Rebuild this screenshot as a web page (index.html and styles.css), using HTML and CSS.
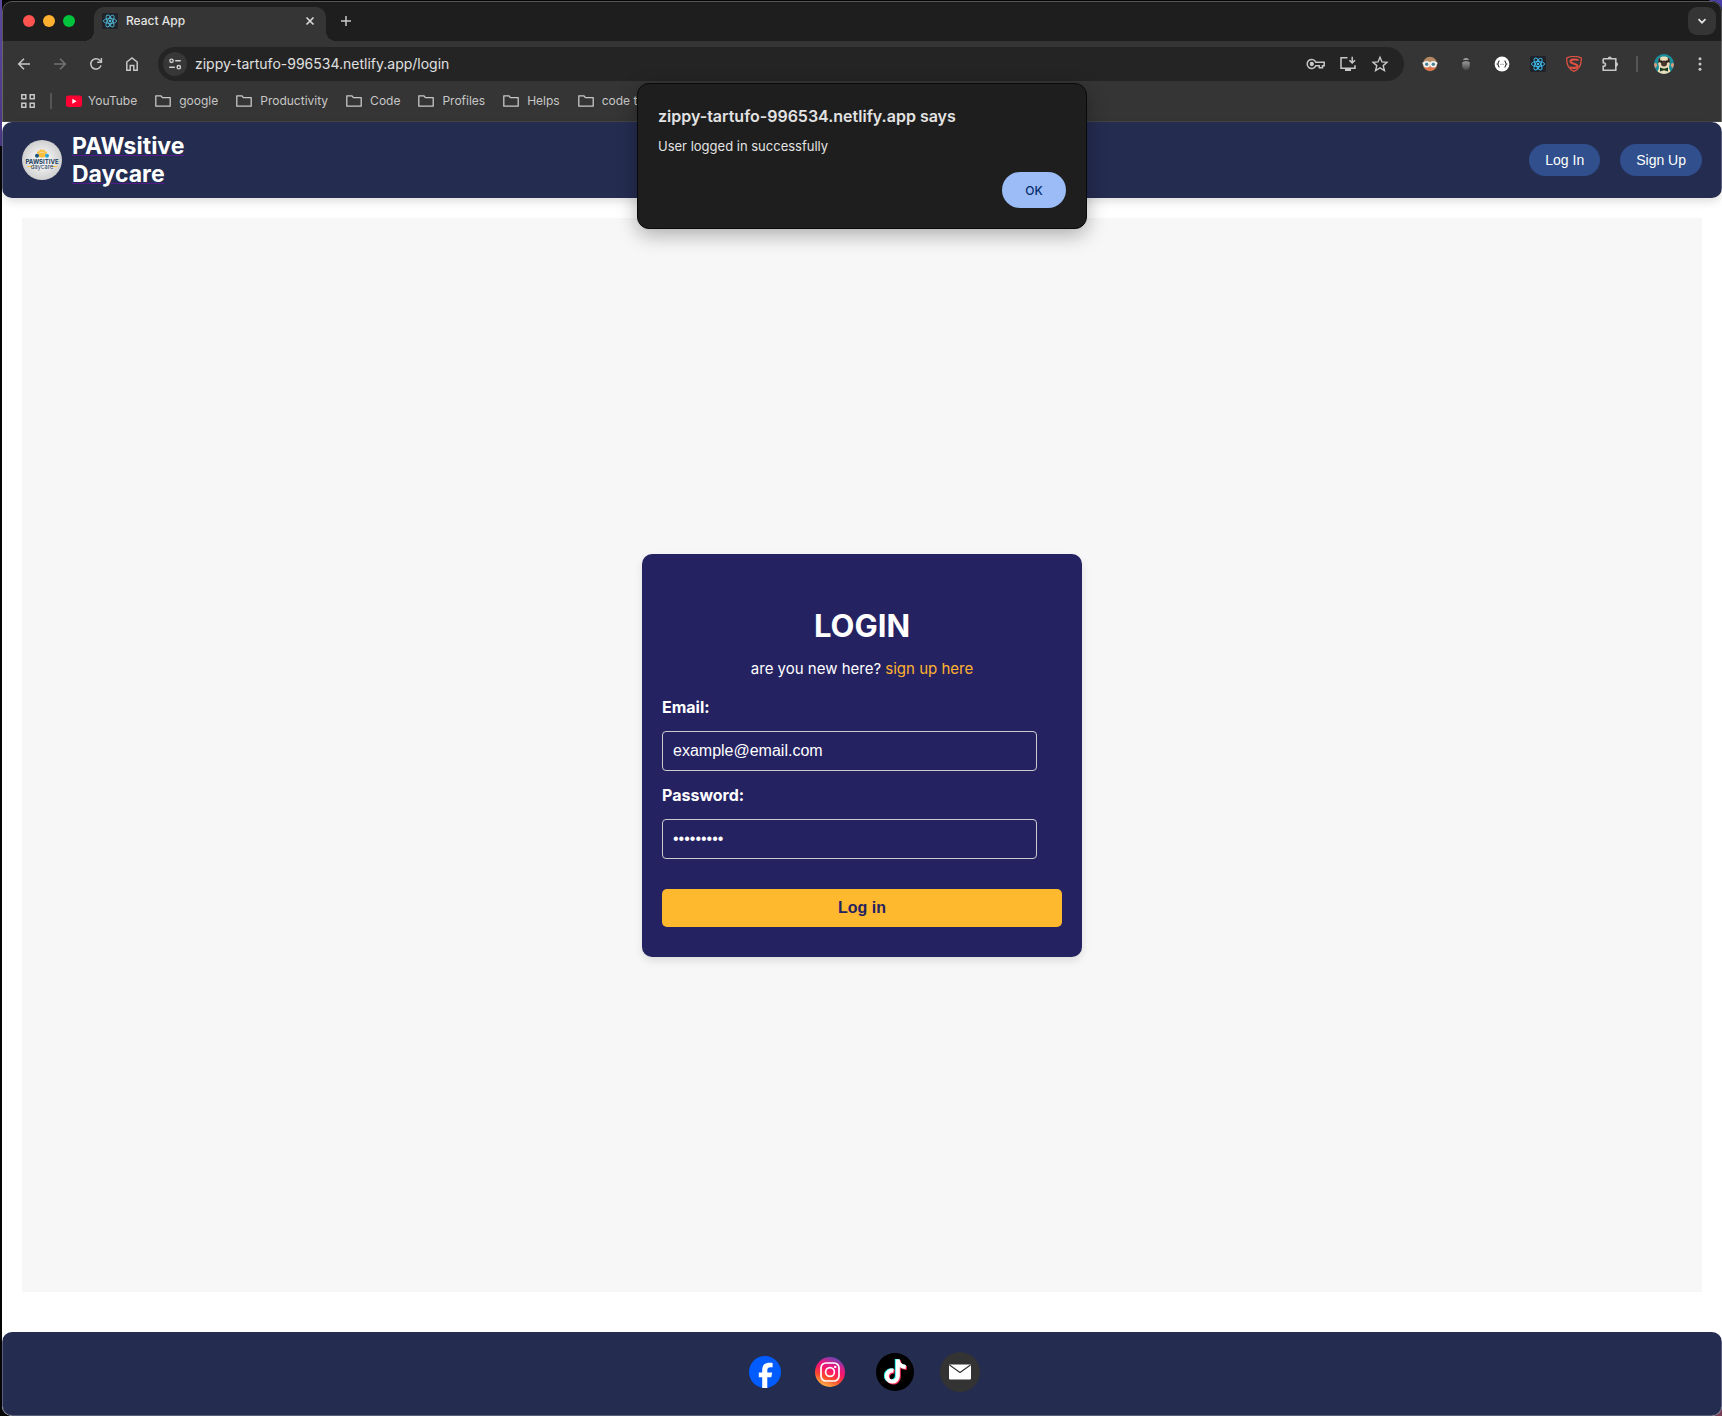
FILE: index.html
```html
<!DOCTYPE html>
<html lang="en">
<head>
<meta charset="utf-8">
<meta name="viewport" content="width=device-width, initial-scale=1">
<title>React App</title>
<link rel="stylesheet" href="styles.css">
</head>
<body>
<svg class="defs" aria-hidden="true">
  <defs>
    <symbol id="react" viewBox="0 0 16 16">
      <rect width="16" height="16" rx="1" fill="#20232a"/>
      <g fill="none" stroke="currentColor" stroke-width="0.9">
        <ellipse cx="8" cy="8" rx="6.6" ry="2.5"/>
        <ellipse cx="8" cy="8" rx="6.6" ry="2.5" transform="rotate(60 8 8)"/>
        <ellipse cx="8" cy="8" rx="6.6" ry="2.5" transform="rotate(120 8 8)"/>
      </g>
      <circle cx="8" cy="8" r="1.3" fill="currentColor"/>
    </symbol>
    <symbol id="folder" viewBox="0 0 16 16">
      <path d="M.8 13.2V2.8h5l1.600 1.800h7.800v8.600z" fill="none" stroke="currentColor" stroke-width="1.300" stroke-linejoin="round"/>
    </symbol>
    <linearGradient id="ig" x1="0.3" y1="1" x2="0.7" y2="0">
      <stop offset="0" stop-color="#fdc04c"/><stop offset="0.3" stop-color="#fb4a2c"/><stop offset="0.55" stop-color="#f8156a"/><stop offset="0.75" stop-color="#d4208c"/><stop offset="1" stop-color="#5a4bb8"/>
    </linearGradient>
    <radialGradient id="logo-bg"><stop offset="0.4" stop-color="#eeeeee"/><stop offset="1" stop-color="#cfcfcf"/></radialGradient>
    <linearGradient id="acorn" x1="0" y1="0" x2="0" y2="1"><stop offset="0" stop-color="#999"/><stop offset="1" stop-color="#444"/></linearGradient>
  </defs>
</svg>

<div class="window">
  <div class="tab-strip">
    <div class="lights">
      <button class="light light-close" aria-label="Close window"></button>
      <button class="light light-min" aria-label="Minimize window"></button>
      <button class="light light-max" aria-label="Maximize window"></button>
    </div>
    <div class="tab">
      <svg class="icon16 react-blue" aria-hidden="true"><use href="#react"/></svg>
      <span class="tab-title">React App</span>
      <button class="icon-btn small" aria-label="Close tab"><svg class="icon16" viewBox="0 0 16 16"><path d="M4.5 4.5l7 7m0-7l-7 7" stroke="#dcdcdc" stroke-width="1.6"/></svg></button>
    </div>
    <button class="icon-btn new-tab" aria-label="New tab"><svg class="icon16" viewBox="0 0 16 16"><path d="M8 3v10M3 8h10" stroke="#c9c9c9" stroke-width="1.5"/></svg></button>
    <button class="tab-search" aria-label="Search tabs"><svg class="icon16" viewBox="0 0 16 16"><path d="M4.5 6.2L8 9.7l3.5-3.5" fill="none" stroke="#e3e3e3" stroke-width="1.7"/></svg></button>
  </div>

  <div class="toolbar">
    <div class="tools">
      <button class="icon-btn" aria-label="Back"><svg class="icon16" viewBox="0 0 16 16"><path d="M14 8H3m5-5.3L2.7 8 8 13.3" fill="none" stroke="#c7c7c7" stroke-width="1.5"/></svg></button>
      <button class="icon-btn" aria-label="Forward" disabled><svg class="icon16" viewBox="0 0 16 16"><path d="M2 8h11M8 2.7L13.3 8 8 13.3" fill="none" stroke="#727272" stroke-width="1.5"/></svg></button>
      <button class="icon-btn" aria-label="Reload"><svg class="icon16" viewBox="0 0 16 16"><path d="M13 9.4A5.2 5.2 0 1 1 11.8 4.3L13 5.5" fill="none" stroke="#c7c7c7" stroke-width="1.5"/><path d="M13.4 2v4.2H9.2" fill="none" stroke="#c7c7c7" stroke-width="1.5"/></svg></button>
      <button class="icon-btn" aria-label="Home"><svg class="icon16" viewBox="0 0 16 16"><path d="M2.8 14.2V6L8 2l5.2 4v8.2H9.8V9.4H6.2v4.8z" fill="none" stroke="#c7c7c7" stroke-width="1.5"/></svg></button>
    </div>
    <div class="address">
      <button class="site-info" aria-label="Site information"><svg class="icon16" viewBox="0 0 16 16" fill="none" stroke="#d0d0d0" stroke-width="1.4"><circle cx="4.5" cy="4.8" r="1.7"/><path d="M8.2 4.8h5.6M2.2 11.2h5.6"/><circle cx="11.8" cy="11.2" r="1.7"/></svg></button>
      <input class="url" type="text" aria-label="Address" value="zippy-tartufo-996534.netlify.app/login">
      <div class="address-actions">
        <button class="icon-btn narrow" aria-label="Passwords"><svg class="icon20" viewBox="0 0 20 20" fill="none" stroke="#c7c7c7" stroke-width="1.5"><path d="M9.8 8.2H18.2v3.6h-1.7v2h-3.2v-2H9.8A4.5 4.5 0 1 1 9.8 8.2z"/><circle cx="5.8" cy="10" r="1.4" fill="#c7c7c7"/></svg></button>
        <button class="icon-btn narrow" aria-label="Install app"><svg class="icon18" viewBox="0 0 18 18" fill="none" stroke="#c7c7c7" stroke-width="1.5"><path d="M8.5 2.8H2v10.4h14v-3"/><path d="M13.2 1.8v6M10.4 5.2l2.8 2.8L16 5.2"/><path d="M6 14.8h6" stroke-width="2.6"/></svg></button>
        <button class="icon-btn narrow" aria-label="Bookmark page"><svg class="icon18" viewBox="0 0 18 18"><path d="M9 2.2l2 4.700 5 .4-3.800 3.300 1.200 4.900L9 12.900l-4.400 2.600 1.200-4.900L2 7.300l5-.4z" fill="none" stroke="#c7c7c7" stroke-width="1.400"/></svg></button>
      </div>
    </div>
    <div class="tools">
      <button class="icon-btn" aria-label="Goggles extension"><svg class="icon16" viewBox="0 0 16 16"><circle cx="8" cy="8" r="7.2" fill="#b58a63"/><path d="M2 11.3h12A7 7 0 0 1 2 11.3z" fill="#e5734a"/><path d="M.6 6.2h14.8v2H.6z" fill="#eee"/><circle cx="4.7" cy="8.3" r="3.3" fill="#f4f4f4"/><circle cx="11.3" cy="8.3" r="3.3" fill="#f4f4f4"/><circle cx="4.7" cy="8.3" r="1.7" fill="#4d8291"/><circle cx="11.3" cy="8.3" r="1.7" fill="#4d8291"/></svg></button>
      <button class="icon-btn" aria-label="Incognito extension"><svg class="icon16" viewBox="0 0 16 16"><path d="M5 4C6 1.400 10 1.400 11 4z" fill="#999"/><path d="M4.200 6.800c0-2 7.600-2 7.600 0v2.700c0 2.500-2 4.800-3.800 4.800s-3.800-2.300-3.800-4.800z" fill="url(#acorn)"/></svg></button>
      <button class="icon-btn" aria-label="JSON extension"><svg class="icon16" viewBox="0 0 16 16"><circle cx="8" cy="8" r="7.400" fill="#fff"/><path d="M5.500 4.800c-1.500 0-.6 2.600-2 3.200 1.400.6.5 3.200 2 3.200M10.500 4.800c1.500 0 .6 2.600 2 3.200-1.400.6-.5 3.200-2 3.200" fill="none" stroke="#333" stroke-width="1.200"/><path d="M6.200 8.300h3.600" stroke="#888" stroke-dasharray="1 .4"/></svg></button>
      <button class="icon-btn react-bright" aria-label="React extension"><svg class="icon16"><use href="#react"/></svg></button>
      <button class="icon-btn" aria-label="Shield extension"><svg class="icon16" viewBox="0 0 16 16" fill="none" stroke="#de5041"><path d="M.8 1.800C5 .2 11 .2 15.200 1.800c.4 6-1 11-7.200 13.600C1.800 12.800.4 7.800.8 1.800z" stroke-width="1.300"/><path d="M12.500 4C9 3.200 4.500 3.200 4.500 5.600c0 2.400 7 1.800 7 4.400 0 2.300-4.500 2.300-8 1.200" stroke-width="2.200"/></svg></button>
      <button class="icon-btn" aria-label="Extensions"><svg class="icon18" viewBox="0 0 18 18"><path d="M2.200 3.700h12.600v3.800M2.200 3.700v4c3 0 3 3.600 0 3.600v4h12.600v-4.200" fill="none" stroke="#c7c7c7" stroke-width="1.600"/><path d="M14.800 7v5" stroke="#c7c7c7" stroke-width="1.600"/><path d="M6.800 3.500a2 2 0 0 1 4 0zM15 7.200a2 2 0 0 1 0 4.200z" fill="#c7c7c7"/></svg></button>
    </div>
    <span class="divider"></span>
    <div class="tools">
      <button class="icon-btn" aria-label="Profile"><svg class="icon20" viewBox="0 0 20 20"><circle cx="10" cy="10" r="10" fill="#178f9d"/><path d="M4 7c0-6 12-6 12 0l-1 7 1.500 3.500a10 10 0 0 1-13 0L5 14z" fill="#ecdcb8"/><path d="M4.300 5l2-1.500L6 8l-2 1zM15.700 5l-2-1.500.3 4.500 2 1z" fill="#33261f"/><ellipse cx="10" cy="9.500" rx="3" ry="3" fill="#44352d"/><circle cx="7" cy="7.500" r="1.200" fill="#221a16"/><circle cx="13" cy="7.500" r="1.200" fill="#221a16"/><path d="M0 10c1-2 3-1 3 1s-1 2-2 3zM20 10c-1-2-3-1-3 1s1 2 2 3z" fill="#e39a76"/><path d="M6 13.500l4 1.300 4-1.300v4l-4-1.300-4 1.300z" fill="#173f25"/></svg></button>
      <button class="icon-btn" aria-label="Menu"><svg class="icon16" viewBox="0 0 16 16" fill="#c7c7c7"><circle cx="8" cy="2.700" r="1.500"/><circle cx="8" cy="8" r="1.500"/><circle cx="8" cy="13.300" r="1.500"/></svg></button>
    </div>
  </div>

  <nav class="bookmarks" aria-label="Bookmarks">
    <button class="icon-btn small" aria-label="Apps"><svg class="icon16" viewBox="0 0 16 16" fill="none" stroke="#c7c7c7" stroke-width="1.500"><path d="M1.800 1.800h4v4h-4zM10.200 1.800h4v4h-4zM1.800 10.200h4v4h-4zM10.200 10.200h4v4h-4z"/></svg></button>
    <span class="divider"></span>
    <a class="bookmark youtube" href="#youtube"><svg class="icon16" viewBox="0 0 16 16"><rect y="2.500" width="16" height="11.500" rx="2.500" fill="#ff0033"/><path d="M6.300 5.800v5l4.300-2.500z" fill="#fff"/></svg>YouTube</a>
    <a class="bookmark" href="#google"><svg class="icon16"><use href="#folder"/></svg>google</a>
    <a class="bookmark" href="#productivity"><svg class="icon16"><use href="#folder"/></svg>Productivity</a>
    <a class="bookmark" href="#code"><svg class="icon16"><use href="#folder"/></svg>Code</a>
    <a class="bookmark" href="#profiles"><svg class="icon16"><use href="#folder"/></svg>Profiles</a>
    <a class="bookmark" href="#helps"><svg class="icon16"><use href="#folder"/></svg>Helps</a>
    <a class="bookmark" href="#code-t"><svg class="icon16"><use href="#folder"/></svg>code t</a>
  </nav>

  <div class="page">
    <header class="site-header">
      <a class="brand" href="#home">
        <svg class="logo" viewBox="0 0 40 40" aria-hidden="true">
          <circle cx="20" cy="20" r="20" fill="url(#logo-bg)"/>
          <g fill="#f9bd3c"><ellipse cx="20" cy="15" rx="3.500" ry="2.600"/><circle cx="16.400" cy="12.600" r="1.400"/><circle cx="18.600" cy="11" r="1.400"/><circle cx="21.400" cy="11" r="1.400"/><circle cx="23.600" cy="12.600" r="1.400"/></g>
          <circle cx="15" cy="15.800" r="2" fill="#17557a"/><circle cx="25" cy="15.800" r="2" fill="#2ba2d4"/>
          <text class="logo-name" x="20" y="24" text-anchor="middle">PAWSITIVE</text>
          <path d="M5.500 26.500h5M30 26.500h5" stroke="#f9bd3c"/>
          <text class="logo-sub" x="20" y="29" text-anchor="middle">daycare</text>
        </svg>
        <span class="brand-name">PAWsitive Daycare</span>
      </a>
      <nav class="account">
        <button class="pill">Log In</button>
        <button class="pill">Sign Up</button>
      </nav>
    </header>

    <main class="panel">
      <form class="card">
        <h1 class="card-title">LOGIN</h1>
        <p class="card-note">are you new here? <a class="signup" href="#signup">sign up here</a></p>
        <label class="label" for="email">Email:</label>
        <input class="field" id="email" type="email" value="example@email.com">
        <label class="label" for="password">Password:</label>
        <input class="field" id="password" type="password" value="pawsitive">
        <button class="submit" type="button">Log in</button>
      </form>
    </main>

    <footer class="site-footer">
      <a class="social" href="#facebook" aria-label="Facebook"><svg viewBox="0 0 40 40"><circle cx="20" cy="20" r="16" fill="#005cff"/><path d="M17.200 36V25.200h-3.400v-4.600h3.400v-2.400c0-5 2.600-7.400 7.400-7.400 1.300 0 2.200.1 3 .3v4.200h-2.100c-2.300 0-3.200 1-3.200 3v2.300h4.900l-.9 4.600h-4V36z" fill="#fff"/></svg></a>
      <a class="social" href="#instagram" aria-label="Instagram"><svg viewBox="0 0 40 40"><circle cx="20" cy="20" r="15" fill="url(#ig)"/><g fill="none" stroke="#fff" stroke-width="1.700"><rect x="11" y="11" width="18" height="18" rx="5"/><circle cx="20" cy="20" r="4.400"/></g><circle cx="25.200" cy="14.900" r="1.200" fill="#fff"/></svg></a>
      <a class="social" href="#tiktok" aria-label="TikTok"><svg viewBox="0 0 40 40"><circle cx="20" cy="20" r="19" fill="#000"/><g fill="none" stroke-width="4"><path d="M18.500 18.700a5.500 5.500 0 1 0 4.300 5.500V7.500c.3 4.500 3.200 7.200 8 7.500" stroke="#25f4ee" transform="translate(-1 -.4)"/><path d="M18.500 18.700a5.500 5.500 0 1 0 4.300 5.500V7.500c.3 4.500 3.200 7.200 8 7.500" stroke="#fe2c55" transform="translate(1 1)"/><path d="M18.500 18.700a5.500 5.500 0 1 0 4.300 5.500V7.500c.3 4.500 3.200 7.200 8 7.500" stroke="#fff"/></g></svg></a>
      <a class="social" href="#mail" aria-label="Email"><svg viewBox="0 0 40 40"><circle cx="20" cy="20" r="20" fill="#333"/><rect x="9" y="12.500" width="22" height="15" rx="1" fill="#fff"/><path d="M9.500 13l10.500 7.600L30.500 13" fill="none" stroke="#333" stroke-width="1.200"/></svg></a>
    </footer>
  </div>

  <dialog class="alert" open aria-labelledby="alert-title">
    <h2 class="alert-title" id="alert-title">zippy-tartufo-996534.netlify.app says</h2>
    <p class="alert-text">User logged in successfully</p>
    <button class="alert-ok">OK</button>
  </dialog>
</div>
</body>
</html>
```
FILE: styles.css
```css
* { box-sizing: border-box; }

body {
  margin: 0;
  min-height: 100vh;
  padding: 1px 0 0 2px;
  display: flex;
  flex-direction: column;
  font-family: Inter, "Liberation Sans", sans-serif;
  background:
    radial-gradient(circle at 100% 0, #4a3fa8 0 12px, transparent 13px),
    radial-gradient(circle at 100% 100%, #7a3f58 0 12px, transparent 13px),
    linear-gradient(#5b4a9e, #4a3580) 0 0 / 2px 146px no-repeat,
    #050505;
}

button { border: 0; padding: 0; background: none; font-family: inherit; cursor: pointer; }
a { text-decoration: none; }
svg { display: block; }

.defs { position: absolute; width: 0; height: 0; }
.icon16 { width: 16px; height: 16px; }
.icon18 { width: 18px; height: 18px; }
.icon20 { width: 20px; height: 20px; }
.react-blue { color: #4fb6d3; }
.react-bright { color: #3fc0f0; }

/* browser window */
.window {
  position: relative;
  flex: 1;
  display: flex;
  flex-direction: column;
  border-radius: 10px;
  overflow: hidden;
  background: #353535;
}
.window::after {
  content: "";
  position: absolute;
  inset: 0;
  border: 1px solid rgba(255, 255, 255, 0.25);
  border-radius: 10px;
  pointer-events: none;
}

.tab-strip {
  display: flex;
  align-items: center;
  height: 40px;
  padding: 0 6px 0 21px;
  background: #1e1e1e;
}
.lights { display: flex; gap: 8px; margin-right: 19px; }
.light { width: 12px; height: 12px; border-radius: 50%; }
.light-close { background: #ff5350; }
.light-min { background: #ffb02f; }
.light-max { background: #00c43c; }

.tab {
  position: relative;
  align-self: flex-end;
  display: flex;
  align-items: center;
  gap: 8px;
  width: 232px;
  height: 34px;
  padding: 0 6px 6px 8px;
  border-radius: 10px 10px 0 0;
  background: #353535;
}
.tab::before,
.tab::after {
  content: "";
  position: absolute;
  bottom: 0;
  width: 10px;
  height: 10px;
}
.tab::before { left: -10px; background: radial-gradient(circle at 0 0, transparent 10px, #353535 10px); }
.tab::after { right: -10px; background: radial-gradient(circle at 100% 0, transparent 10px, #353535 10px); }
.tab-title { flex: 1; padding-bottom: 2px; font-size: 12px; font-weight: 500; color: #e3e3e3; }

.icon-btn { display: grid; place-items: center; width: 24px; height: 24px; }
.icon-btn.small { width: 20px; }
.icon-btn.narrow { width: 20px; }
.new-tab { margin-left: 8px; }
.tab-search {
  display: grid;
  place-items: center;
  width: 28px;
  height: 28px;
  margin-left: auto;
  border-radius: 9px;
  background: #353535;
}

.toolbar {
  display: flex;
  align-items: center;
  gap: 14px;
  height: 46px;
  padding: 0 10px;
}
.tools { display: flex; gap: 12px; }
.address {
  flex: 1;
  display: flex;
  align-items: center;
  gap: 8px;
  height: 34px;
  padding: 0 14px 0 5px;
  border-radius: 17px;
  background: #242424;
}
.site-info {
  display: grid;
  place-items: center;
  width: 24px;
  height: 24px;
  border-radius: 50%;
  background: #373737;
}
.url {
  flex: 1;
  min-width: 0;
  padding: 0 0 2px;
  border: 0;
  background: none;
  font-family: inherit;
  font-size: 14px;
  color: #e0e0e0;
}
.address-actions { display: flex; gap: 12px; }
.divider { width: 2px; height: 16px; background: #555; }

.bookmarks {
  display: flex;
  align-items: center;
  height: 35px;
  padding: 0 16px 7px;
  border-bottom: 1px solid #454545;
}
.bookmarks .divider { margin: 0 14px 0 12px; }
.bookmark {
  display: flex;
  align-items: center;
  gap: 8px;
  margin-right: 18px;
  font-size: 12px;
  white-space: nowrap;
  color: #c7c7c7;
}
.bookmark.youtube { gap: 6px; }

/* page */
.page { flex: 1; display: flex; flex-direction: column; background: #fff; }

.site-header {
  display: flex;
  justify-content: space-between;
  align-items: center;
  padding: 10px 20px;
  border-radius: 10px;
  background: #242c50;
  box-shadow: 0 4px 8px rgba(0, 0, 0, 0.12);
}
.brand { display: flex; align-items: center; gap: 10px; }
.logo { width: 40px; height: 40px; }
.logo-name { font: 700 6px Inter, sans-serif; fill: #17405e; }
.logo-sub { font: 400 6px Inter, sans-serif; fill: #17405e; }
.brand-name {
  width: 130px;
  font-size: 23px;
  font-weight: 700;
  line-height: 28px;
  color: #fff;
  text-decoration: underline 1px #551a8b;
}
.account { display: flex; gap: 20px; }
.pill {
  height: 32px;
  padding: 0 16px;
  border-radius: 16px;
  background: #304f8c;
  font-family: "Liberation Sans", sans-serif;
  font-size: 14px;
  color: #fff;
}

.panel {
  flex: 1;
  display: grid;
  place-items: center;
  margin: 20px 20px 40px;
  background: #f7f7f7;
}
.card {
  display: flex;
  flex-direction: column;
  width: 440px;
  padding: 30px 20px;
  border-radius: 10px;
  background: #252262;
  box-shadow: 0 4px 8px rgba(0, 0, 0, 0.1);
  color: #fff;
}
.card-title {
  margin: 23px 0 14px;
  font-size: 31px;
  line-height: 38px;
  text-align: center;
}
.card-note { margin: 0 0 18px; font-size: 15px; line-height: 20px; text-align: center; }
.signup { color: #ffb22e; }
.label { margin-bottom: 14px; font-size: 16px; font-weight: 700; line-height: 20px; }
.field {
  width: 375px;
  height: 40px;
  margin: 0 0 14px;
  padding: 0 10px;
  border: 1px solid #ccc;
  border-radius: 4px;
  background: none;
  font-family: "Liberation Sans", sans-serif;
  font-size: 16px;
  color: #fff;
}
.submit {
  height: 38px;
  margin-top: 16px;
  border-radius: 5px;
  background: #ffb92e;
  font-family: "Liberation Sans", sans-serif;
  font-size: 16px;
  font-weight: 700;
  color: #252262;
}

.site-footer {
  display: flex;
  justify-content: center;
  gap: 25px;
  padding: 20px 20px 24px;
  border-radius: 10px;
  background: #242c50;
}
.social { width: 40px; height: 40px; }

/* alert over the page */
.alert {
  position: absolute;
  top: 82px;
  left: 0;
  right: 0;
  display: flex;
  flex-direction: column;
  width: 450px;
  margin: 0 auto;
  padding: 22px 20px 20px;
  border: 1px solid #0a0a0a;
  border-radius: 12px;
  background: #1e1e1e;
  box-shadow: 0 6px 20px rgba(0, 0, 0, 0.3);
  color: #e3e3e3;
}
.alert-title { margin: 0 0 10px; font-size: 16px; font-weight: 600; line-height: 20px; }
.alert-text { margin: 0 0 16px; font-size: 13px; line-height: 20px; }
.alert-ok {
  align-self: flex-end;
  width: 64px;
  height: 36px;
  border-radius: 18px;
  background: #9bbcf7;
  font-size: 12px;
  font-weight: 500;
  color: #062e6f;
}
```
